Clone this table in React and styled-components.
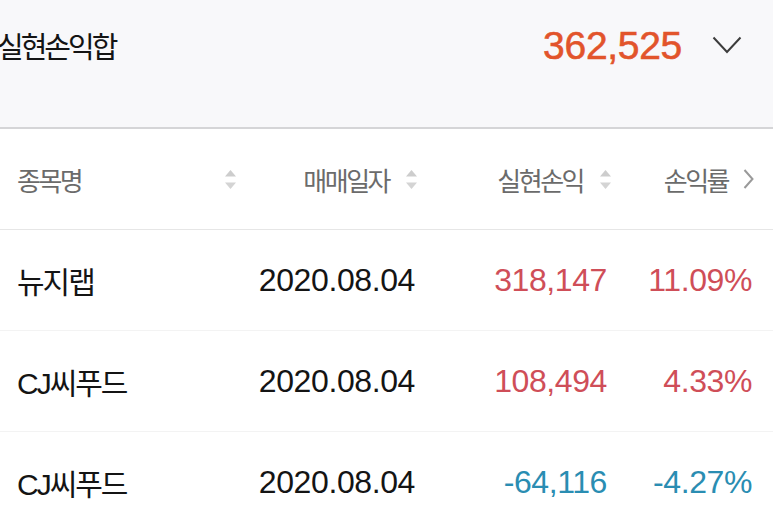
import React from "react";
import styled, { createGlobalStyle } from "styled-components";

const Global = createGlobalStyle`
  html, body { margin: 0; padding: 0; background: #ffffff; }
  body { font-family: "Liberation Sans", "Noto Sans CJK KR", sans-serif; overflow: hidden; }
  * { box-sizing: border-box; }
`;

const Page = styled.div`
  width: 773px;
  height: 515px;
  overflow: hidden;
  background: #ffffff;
`;

const Summary = styled.div`
  height: 129px;
  background: #f8f8fa;
  border-bottom: 2px solid #d5d5d7;
  padding-bottom: 37px;
`;

const SummaryRow = styled.div`
  height: 90px;
  display: flex;
  align-items: center;
  padding: 0 31px 0 0;
`;

const SummaryTitle = styled.div`
  margin-left: -3px;
  flex: 1;
  font-family: "Noto Sans CJK KR", sans-serif;
  font-size: 29px;
  letter-spacing: -3px;
  color: #141414;
`;

const SummaryValue = styled.div`
  font-family: "Liberation Sans", sans-serif;
  font-size: 39px;
  color: #e2542b;
  -webkit-text-stroke: 0.6px #e2542b;
  letter-spacing: -0.3px;
  margin-right: 30px;
  padding-top: 2px;
`;

const Table = styled.div`
  display: flex;
  flex-direction: column;
`;

const Row = styled.div`
  display: grid;
  grid-template-columns: 220px 181px 194px 140px;
  height: ${(p) => p.$h}px;
  padding-left: 17px;
  align-items: center;
  border-bottom: 1px solid ${(p) => p.$line};
`;

const HeadCell = styled.div`
  display: flex;
  align-items: center;
  justify-content: ${(p) => (p.$spread ? "space-between" : "flex-end")};
  gap: ${(p) => p.$gap || 16}px;
  font-family: "Noto Sans CJK KR", sans-serif;
  font-size: 26px;
  letter-spacing: -2.5px;
  color: #6b6b6b;
  margin-right: ${(p) => p.$mr || 0}px;
`;

const NameCell = styled.div`
  font-family: "Liberation Sans", "Noto Sans CJK KR", sans-serif;
  font-size: 30px;
  letter-spacing: -2px;
  color: #141414;
`;

const NumCell = styled.div`
  text-align: right;
  font-family: "Liberation Sans", sans-serif;
  font-size: 32px;
  color: ${(p) => p.$color};
  padding-right: ${(p) => p.$pr || 0}px;
  letter-spacing: -0.4px;
`;

const SortIcon = () => (
  <svg width="13" height="21" viewBox="0 0 13 21">
    <path d="M6.5 1 L12 7.5 L1 7.5 Z" fill="#cdcdcd" />
    <path d="M6.5 20 L12 13.5 L1 13.5 Z" fill="#d4d4d4" />
  </svg>
);

const ChevronDown = () => (
  <svg width="30" height="18" viewBox="0 0 30 18">
    <path d="M1.5 1.5 L15 16 L28.5 1.5" fill="none" stroke="#3c3c3c" strokeWidth="2" />
  </svg>
);

const ChevronRight = () => (
  <svg width="11" height="22" viewBox="0 0 11 22">
    <path d="M1.5 2 L9.5 11 L1.5 20" fill="none" stroke="#9a9a9a" strokeWidth="2" />
  </svg>
);

const RED = "#cf4e58";
const BLUE = "#2a8db2";

const rows = [
  { name: "뉴지랩", date: "2020.08.04", pnl: "318,147", rate: "11.09%", color: RED },
  { name: "CJ씨푸드", date: "2020.08.04", pnl: "108,494", rate: "4.33%", color: RED },
  { name: "CJ씨푸드", date: "2020.08.04", pnl: "-64,116", rate: "-4.27%", color: BLUE },
];

export default function App() {
  return (
    <Page>
      <Global />
      <Summary>
        <SummaryRow>
          <SummaryTitle>실현손익합</SummaryTitle>
          <SummaryValue>362,525</SummaryValue>
          <ChevronDown />
        </SummaryRow>
      </Summary>
      <Table>
        <Row $h={101} $line="#e6e6e6">
          <HeadCell $spread>
            <span>종목명</span>
            <SortIcon />
          </HeadCell>
          <HeadCell>
            <span>매매일자</span>
            <SortIcon />
          </HeadCell>
          <HeadCell>
            <span>실현손익</span>
            <SortIcon />
          </HeadCell>
          <HeadCell $mr={-2} $gap={15}>
            <span>손익률</span>
            <ChevronRight />
          </HeadCell>
        </Row>
        {rows.map((r, i) => (
          <Row key={i} $h={101} $line="#f3f3f3">
            <NameCell>{r.name}</NameCell>
            <NumCell $color="#141414" $pr={3}>{r.date}</NumCell>
            <NumCell $color={r.color} $pr={5}>{r.pnl}</NumCell>
            <NumCell $color={r.color}>{r.rate}</NumCell>
          </Row>
        ))}
      </Table>
    </Page>
  );
}
